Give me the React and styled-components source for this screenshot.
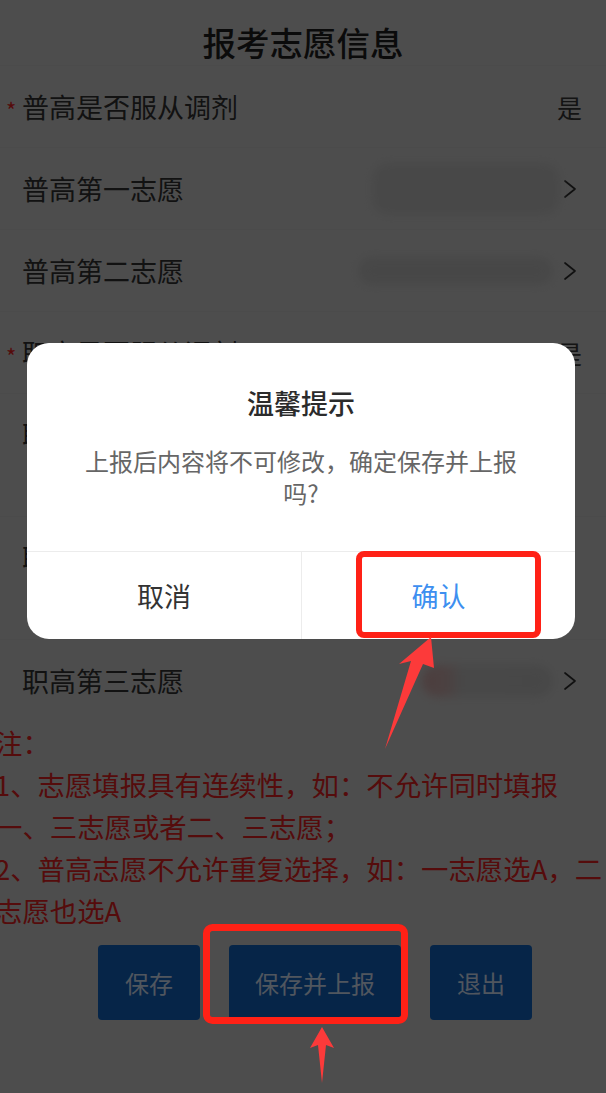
import React from 'react'
import styled, { createGlobalStyle } from 'styled-components'

const GlobalStyle = createGlobalStyle`
  html, body {
    margin: 0;
    padding: 0;
    background: #c1c1c1;
  }
  * {
    box-sizing: border-box;
  }
`

const FONT = `"Noto Sans CJK SC", "Noto Sans", sans-serif`

const rows = [
  { label: '普高是否服从调剂', required: true, value: '是' },
  { label: '普高第一志愿', blob: { w: 188, h: 52, bg: '#b4b4b4' } },
  { label: '普高第二志愿', blob: { w: 195, h: 28, bg: '#b2b2b2' }, gap: 9 },
  { label: '职高是否服从调剂', required: true, value: '是' },
  { label: '职高第一志愿', tall: true },
  { label: '职高第二志愿', tall: true },
  { label: '职高第三志愿', blob: { w: 131, h: 32, bg: 'linear-gradient(90deg, #c09a9a 0%, #bca4a4 20%, #b3b3b3 30%, #b2b2b2 100%)' }, gap: 9 },
]

const notes = [
  '注：',
  '1、志愿填报具有连续性，如：不允许同时填报',
  '一、三志愿或者二、三志愿；',
  '2、普高志愿不允许重复选择，如：一志愿选A，二',
  '志愿也选A',
]

const Chevron = () => (
  <ChevronSvg viewBox="0 0 20 22" width="20" height="22">
    <polyline points="3,3 13,11 3,19" fill="none" stroke="#2a2a2a" strokeWidth="1.7" strokeLinecap="round" strokeLinejoin="round" />
  </ChevronSvg>
)

export default function App() {
  return (
    <Screen>
      <GlobalStyle />
      <Header>报考志愿信息</Header>
      {rows.map((r) => (
        <Row key={r.label} $tall={r.tall}>
          <Star>{r.required ? '*' : ''}</Star>
          <Label>{r.label}</Label>
          {!r.tall && (
            <Value>
              {r.value && <ValueText>{r.value}</ValueText>}
              {r.blob && (
                <>
                  <Blur $w={r.blob.w} $h={r.blob.h} $bg={r.blob.bg} $gap={r.gap || 2} />
                  <Chevron />
                </>
              )}
            </Value>
          )}
        </Row>
      ))}
      <Notes>
        {notes.map((n) => (
          <NoteLine key={n}>{n}</NoteLine>
        ))}
      </Notes>
      <Actions>
        <ActionButton $w={102}>保存</ActionButton>
        <ActionButton $w={172}>保存并上报</ActionButton>
        <ActionButton $w={102}>退出</ActionButton>
      </Actions>

      <Mask />

      <Dialog>
        <DialogBody>
          <DialogTitle>温馨提示</DialogTitle>
          <DialogMessage>上报后内容将不可修改，确定保存并上报吗?</DialogMessage>
        </DialogBody>
        <DialogFooter>
          <DialogButton>取消</DialogButton>
          <DialogButton $primary>确认</DialogButton>
        </DialogFooter>
      </Dialog>

      <Marks viewBox="0 0 606 1093" width="606" height="1093">
        <rect x="359" y="554" width="179" height="81" rx="5" fill="none" stroke="#ff2116" strokeWidth="6" />
        <rect x="206.5" y="927.5" width="198" height="93" rx="6" fill="none" stroke="#ff2116" strokeWidth="7" />
        <polygon points="431,637 434,668 423,664 385,749 411,661 399,664" fill="#fc3a3a" />
        <polygon points="322,1027 334,1048 326,1045 322,1083 318,1045 310,1048" fill="#fc3a3a" />
      </Marks>
    </Screen>
  )
}

const Screen = styled.div`
  position: relative;
  width: 606px;
  height: 1093px;
  overflow: hidden;
  background: #c1c1c1;
  font-family: ${FONT};
  color: #333;
`

const Header = styled.div`
  height: 65px;
  padding-top: 18px;
  line-height: 47px;
  text-align: center;
  font-size: 33.5px;
  font-weight: 500;
  color: #1c1c1c;
`

const Row = styled.div`
  display: flex;
  align-items: ${(p) => (p.$tall ? 'flex-start' : 'center')};
  height: ${(p) => (p.$tall ? 123 : 82)}px;
  padding: 0 24px 0 6px;
  border-top: 1px solid #bbbbbb;
`

const Star = styled.span`
  width: 16px;
  line-height: 81px;
  font-size: 22px;
  color: #d41c1c;
  align-self: flex-start;
  padding-top: 3px;
`

const Label = styled.span`
  font-size: 27px;
  line-height: 81px;
  color: #2e2e2e;
  white-space: nowrap;
`

const Value = styled.div`
  margin-left: auto;
  display: flex;
  align-items: center;
`

const ValueText = styled.span`
  font-size: 25px;
  color: #333;
`

const Blur = styled.div`
  width: ${(p) => p.$w}px;
  height: ${(p) => p.$h}px;
  margin-right: ${(p) => p.$gap}px;
  background: ${(p) => p.$bg};
  border-radius: 16px;
  filter: blur(5px);
`

const ChevronSvg = styled.svg`
  display: block;
`

const Notes = styled.div`
  margin-left: -5px;
  color: #d42020;
  font-size: 27.4px;
  line-height: 42px;
`

const NoteLine = styled.div`
  white-space: nowrap;
`

const Actions = styled.div`
  display: flex;
  gap: 29px;
  margin-top: 14px;
  padding-left: 98px;
`

const ActionButton = styled.div`
  width: ${(p) => p.$w}px;
  height: 75px;
  display: flex;
  align-items: center;
  justify-content: center;
  background: #0f5cb4;
  border-radius: 4px;
  color: #c8d6ea;
  font-size: 24px;
`

const Mask = styled.div`
  position: absolute;
  inset: 0;
  background: rgba(0, 0, 0, 0.6);
`

const Dialog = styled.div`
  position: absolute;
  top: 343px;
  left: 27px;
  width: 548px;
  background: #fff;
  border-radius: 22px;
  overflow: hidden;
`

const DialogBody = styled.div`
  padding: 42px 48px 42px;
  text-align: center;
`

const DialogTitle = styled.div`
  font-size: 27px;
  line-height: 36px;
  font-weight: 500;
  color: #2b2b2b;
`

const DialogMessage = styled.div`
  margin-top: 24px;
  font-size: 24px;
  line-height: 32px;
  color: #666;
`

const DialogFooter = styled.div`
  display: grid;
  grid-template-columns: 1fr 1fr;
  height: 88px;
  border-top: 1px solid #ececec;
`

const DialogButton = styled.div`
  display: flex;
  align-items: center;
  justify-content: center;
  font-size: 27px;
  color: ${(p) => (p.$primary ? '#3d8ff0' : '#333')};
  border-left: ${(p) => (p.$primary ? '1px solid #ececec' : 'none')};
`

const Marks = styled.svg`
  position: absolute;
  left: 0;
  top: 0;
  pointer-events: none;
`
